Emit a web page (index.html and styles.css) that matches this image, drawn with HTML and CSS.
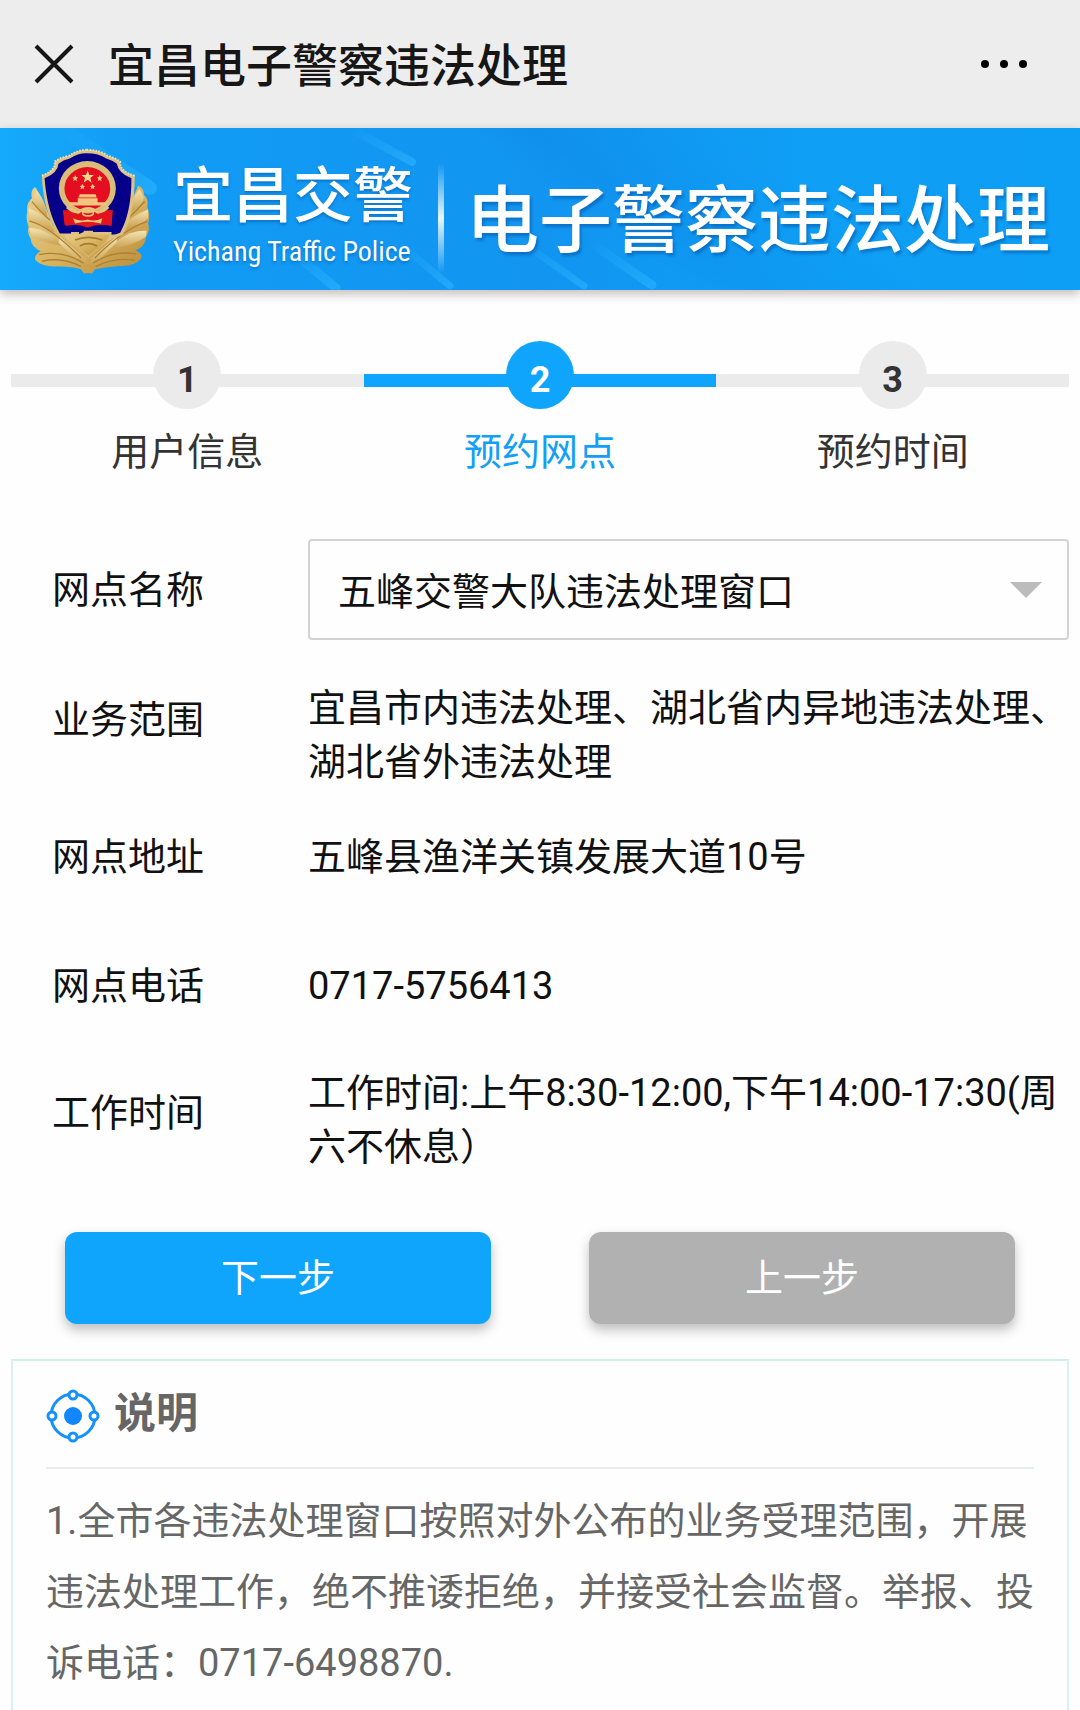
FILE: index.html
```html
<!DOCTYPE html>
<html lang="zh-CN">
<head>
<meta charset="utf-8">
<meta name="viewport" content="width=device-width, initial-scale=1">
<title>宜昌电子警察违法处理</title>
<link rel="stylesheet" href="styles.css">
</head>
<body>
<header class="topbar">
  <button class="icon-button" type="button" aria-label="关闭">
    <svg width="40" height="40" viewBox="0 0 40 40"><path d="M2 2L38 38M38 2L2 38" stroke="#161616" stroke-width="4" fill="none"/></svg>
  </button>
  <h1 class="topbar-title">宜昌电子警察违法处理</h1>
  <button class="icon-button" type="button" aria-label="更多">
    <svg width="48" height="12" viewBox="0 0 48 12" fill="#000"><circle cx="5" cy="6" r="4"/><circle cx="24" cy="6" r="4"/><circle cx="43" cy="6" r="4"/></svg>
  </button>
</header>

<div class="banner">
  <svg class="streaks" viewBox="0 0 1080 162" preserveAspectRatio="none" aria-hidden="true">
    <defs>
      <linearGradient id="streak" x1="0" y1="0" x2="1" y2="1">
        <stop offset="0" stop-color="#2bb4ff" stop-opacity="0"/><stop offset="1" stop-color="#2bb4ff" stop-opacity=".6"/>
      </linearGradient>
    </defs>
    <g fill="none" stroke="url(#streak)" stroke-linecap="round">
      <path d="M590 114L652 157" stroke-width="9"/>
      <path d="M510 106L584 158" stroke-width="7"/>
      <path d="M400 116L450 158" stroke-width="7"/>
      <path d="M290 122L336 160" stroke-width="9"/>
      <path d="M350 0L412 34" stroke-width="8"/>
      <path d="M60 0L150 60" stroke-width="14"/>
    </g>
  </svg>
  <svg class="emblem" viewBox="45 42 380 385" role="img" aria-label="警徽">
    <defs>
      <linearGradient id="gold" x1="0" y1="0" x2="1" y2="1">
        <stop offset="0" stop-color="#e9d08c"/><stop offset=".5" stop-color="#d9b564"/><stop offset="1" stop-color="#b98a35"/>
      </linearGradient>
      <linearGradient id="pale" x1="0" y1="0" x2="0" y2="1">
        <stop offset="0" stop-color="#f3e5b4"/><stop offset="1" stop-color="#c79c49"/>
      </linearGradient>
    </defs>
    <path fill="url(#gold)" d="M76 162Q60 172 66 196Q48 210 52 238Q46 256 56 282Q50 300 62 318Q64 342 92 356Q72 366 76 382Q96 404 150 402Q190 402 214 410L222 422H248L256 410Q290 402 332 400Q376 402 396 376Q400 362 378 354Q410 340 410 312Q424 296 416 272Q424 250 414 222Q418 196 404 186Q404 164 386 158L372 190L340 280H130L98 200Z"/>
    <g fill="url(#pale)">
      <path d="M80 172Q110 210 112 250Q80 230 70 198Z"/>
      <path d="M56 226Q110 246 136 300Q90 280 56 250Z"/>
      <path d="M58 286Q120 290 160 340Q90 330 62 308Z"/>
      <path d="M390 168Q362 200 362 240Q396 222 404 194Z"/>
      <path d="M416 230Q360 250 338 290Q392 282 416 256Z"/>
      <path d="M412 294Q350 290 296 350Q370 340 410 312Z"/>
      <path d="M150 312L228 378L236 398L244 378L322 310L322 328L246 404H226L146 330Z"/>
    </g>
    <g fill="none" stroke="#ad8136" stroke-width="4">
      <path d="M88 366Q160 352 222 392M380 364Q310 352 250 392M96 386Q160 372 214 402M376 384Q320 372 258 402"/>
      <path d="M58 264Q120 280 214 376M414 266Q340 290 256 376M66 206Q90 236 120 262M406 206Q380 236 350 262"/>
    </g>
    <path d="M230 50Q270 50 294 68Q320 76 332 86Q330 116 376 128Q376 246 340 306Q290 320 236 374Q180 322 148 306Q100 240 96 128Q140 112 134 86Q150 74 178 68Q200 52 230 50Z" fill="#dcc183"/>
    <path d="M230 50Q270 50 294 68Q320 76 332 86Q330 116 376 128" fill="none" stroke="#f0deb0" stroke-width="6" stroke-dasharray="5 4"/>
    <path d="M96 128Q140 112 134 86Q150 74 178 68Q200 52 230 50" fill="none" stroke="#f0deb0" stroke-width="6" stroke-dasharray="5 4"/>
    <path d="M230 60Q268 60 290 76Q310 82 322 92Q326 120 366 136Q366 240 332 300Q320 306 306 306V298H250V294H222V304H208V298H184V302H150Q112 240 104 136Q144 120 146 92Q160 80 180 76Q204 60 230 60Z" fill="#050087"/>
    <path fill="url(#gold)" d="M164 306L190 304H208L222 298H250V306H300L290 326L236 370L178 324Z"/>
    <path d="M196 322Q236 306 278 322M210 340Q236 326 262 340" fill="none" stroke="#a77b2f" stroke-width="5"/>
    <path d="M160 232H310L306 280Q270 270 234 284Q200 270 168 280Z" fill="#e51520"/>
    <ellipse cx="233" cy="166" rx="86" ry="82" fill="#d9bd79"/>
    <ellipse cx="233" cy="167" rx="69" ry="65" fill="#e40e20"/>
    <path fill="#f6d78e" d="M234 112L239 126H253L242 135L246 149L234 140L222 149L226 135L215 126H229Z"/>
    <g fill="#efc878"><path d="M196 126L199 132L205 133L200 138L202 145L196 141L190 145L192 138L188 133L194 132Z"/><path d="M270 126L273 132L279 133L274 138L276 145L270 141L264 145L266 138L262 133L268 132Z"/><path d="M218 152L221 158L226 159L222 163L223 169L218 166L212 169L214 163L210 159L215 158Z"/><path d="M249 152L252 158L257 159L253 163L254 169L249 166L243 169L245 163L241 159L246 158Z"/></g>
    <path fill="#f2c57c" d="M210 184H258L261 194H206ZM204 196H264V208H204ZM178 208H292L290 218H180Z"/>
    <path d="M160 234H208Q234 250 262 234H306L306 276H280Q236 266 190 276H164Z" fill="#e3131d"/>
    <path d="M172 222Q186 236 206 238Q236 216 264 238Q284 236 296 222" fill="none" stroke="#e6c47c" stroke-width="9"/>
    <path d="M190 256Q212 268 234 260Q256 268 278 256L274 272Q234 262 196 272Z" fill="#ecc577"/>
    <ellipse cx="235" cy="241" rx="16" ry="8" fill="none" stroke="#ecc577" stroke-width="5"/>
  </svg>
  <div class="brand">
    <span class="brand-name">宜昌交警</span>
    <span class="brand-latin" lang="en">Yichang Traffic Police</span>
  </div>
  <span class="banner-rule"></span>
  <strong class="banner-title">电子警察违法处理</strong>
</div>

<main class="page">
  <ol class="steps">
    <li class="step"><span class="step-track"><span class="step-dot">1</span></span><span class="step-label">用户信息</span></li>
    <li class="step step-active" aria-current="step"><span class="step-track"><span class="step-dot">2</span></span><span class="step-label">预约网点</span></li>
    <li class="step"><span class="step-track"><span class="step-dot">3</span></span><span class="step-label">预约时间</span></li>
  </ol>

  <form class="form">
    <div class="row row-select">
      <label class="label" for="site">网点名称</label>
      <div class="select-wrap">
        <select class="select" id="site"><option>五峰交警大队违法处理窗口</option></select>
        <svg class="caret" width="32" height="16" viewBox="0 0 32 16"><path d="M0 0H32L16 16Z" fill="#bcbcbc"/></svg>
      </div>
    </div>
    <dl class="details">
      <div class="row row-scope"><dt class="label">业务范围</dt><dd class="value">宜昌市内违法处理、湖北省内异地违法处理、湖北省外违法处理</dd></div>
      <div class="row row-address"><dt class="label">网点地址</dt><dd class="value">五峰县渔洋关镇发展大道10号</dd></div>
      <div class="row row-phone"><dt class="label">网点电话</dt><dd class="value">0717-5756413</dd></div>
      <div class="row row-hours"><dt class="label">工作时间</dt><dd class="value">工作时间:上午8:30-12:00,下午14:00-17:30(周六不休息）</dd></div>
    </dl>
    <div class="actions">
      <button class="button button-next" type="button">下一步</button>
      <button class="button button-back" type="button">上一步</button>
    </div>
  </form>

  <section class="notice">
    <h2 class="notice-title">
      <svg width="54" height="54" viewBox="0 0 54 54" fill="none" stroke="#1790fb" aria-hidden="true">
        <circle cx="27" cy="27" r="22" stroke-width="3"/>
        <circle cx="27" cy="27" r="9" fill="#1187fb" stroke="none"/>
        <g fill="#fff" stroke-width="3"><circle cx="27" cy="6" r="4"/><circle cx="48" cy="27" r="4"/><circle cx="27" cy="48" r="4"/><circle cx="6" cy="27" r="4"/></g>
      </svg>
      <span class="notice-name">说明</span>
    </h2>
    <p class="notice-text">1.全市各违法处理窗口按照对外公布的业务受理范围，开展违法处理工作，绝不推诿拒绝，并接受社会监督。举报、投诉电话：0717-6498870.</p>
  </section>
</main>
</body>
</html>
```
FILE: styles.css
```css
* {
  box-sizing: border-box;
}

body {
  margin: 0;
  min-height: 100vh;
  display: flex;
  flex-direction: column;
  background: #fefefe;
  color: #111;
  font-family: Roboto, "Noto Sans CJK SC", sans-serif;
  font-size: 38px;
  line-height: 54px;
}

/* Title bar */
.topbar {
  display: flex;
  align-items: center;
  height: 128px;
  padding: 0 52px 0 34px;
  background: #ededed;
}

.icon-button {
  display: flex;
  padding: 0;
  border: 0;
  background: none;
}

.topbar-title {
  flex: 1;
  margin: 0 0 0 34px;
  padding-top: 4px;
  color: #161616;
  font-size: 46px;
  font-weight: 500;
}

/* Banner */
.banner {
  position: relative;
  isolation: isolate;
  display: flex;
  align-items: center;
  height: 162px;
  padding: 4px 24px 0 25px;
  color: #fff;
  background:
    linear-gradient(35deg, transparent 53%, rgba(0, 100, 215, 0.1) 58%, transparent 72%),
    linear-gradient(90deg, #15aafb 0%, #129cf5 12%, #1195f0 50%, #0f9ff5 75%, #0d9ff5 100%);
  box-shadow: 0 4px 10px rgba(60, 30, 30, 0.3);
}

.streaks {
  position: absolute;
  inset: 0;
  z-index: -1;
  width: 100%;
  height: 100%;
}

.emblem {
  width: 126px;
  height: 128px;
  flex: none;
}

.brand {
  display: flex;
  flex: none;
  flex-direction: column;
  width: 240px;
  margin-left: 22px;
  padding-top: 10px;
  text-shadow: 0 2px 3px rgba(0, 60, 140, 0.4);
  white-space: nowrap;
}

.brand-name {
  font-size: 60px;
  font-weight: 500;
  line-height: 72px;
}

.brand-latin {
  font-family: "Liberation Sans Narrow", "Roboto Condensed", "Liberation Sans", sans-serif;
  font-size: 28px;
  font-weight: 400;
  line-height: 38px;
}

.banner-rule {
  flex: none;
  width: 6px;
  height: 110px;
  margin: 14px 22px 0 25px;
  background: linear-gradient(transparent, rgba(255, 255, 255, 0.9) 50%, transparent);
}

.banner-title {
  flex: 1;
  padding-top: 20px;
  font-size: 73px;
  font-weight: 500;
  line-height: 80px;
  white-space: nowrap;
  text-shadow: 2px 3px 3px rgba(0, 60, 140, 0.4);
}

/* Page body */
.page {
  flex: 1;
  display: flex;
  flex-direction: column;
  padding: 51px 11px 0;
}

/* Progress steps */
.steps {
  display: grid;
  grid-template-columns: repeat(3, 1fr);
  margin: 0;
  padding: 0;
  list-style: none;
}

.step {
  display: flex;
  flex-direction: column;
  gap: 16px;
  text-align: center;
  color: #333;
}

.step-track {
  display: flex;
  justify-content: center;
  background: linear-gradient(#ebebeb, #ebebeb) 0 33px / 100% 13px no-repeat;
}

.step-dot {
  width: 68px;
  height: 68px;
  padding-top: 8px;
  border-radius: 50%;
  background: #ebebeb;
  font-size: 36px;
  font-weight: 700;
  line-height: 62px;
}

.step-active .step-label {
  color: #12a0f4;
}

.step-active .step-track {
  background-image: linear-gradient(#10a5fc, #10a5fc);
}

.step-active .step-dot {
  background: #10a5fc;
  color: #fff;
}

/* Form */
.form {
  padding-top: 60px;
}

.row {
  display: grid;
  grid-template-columns: 256px 1fr;
  align-items: start;
  padding-left: 41px;
}

.row-select {
  align-items: center;
}

.details {
  margin: 0;
}

.row-scope,
.row-address {
  margin-top: 41px;
}

.row-phone {
  margin-top: 75px;
}

.row-hours {
  margin-top: 53px;
}

.row-scope .label {
  padding-top: 12px;
}

.row-hours .label {
  padding-top: 20px;
}

.value {
  margin: 0;
}

.select-wrap {
  display: grid;
  align-items: center;
}

.select {
  grid-area: 1 / 1;
  width: 100%;
  height: 101px;
  padding: 4px 80px 0 28px;
  border: 2px solid #d3d3d3;
  border-radius: 4px;
  background: #fefefe;
  color: #111;
  font: inherit;
  appearance: none;
}

.caret {
  grid-area: 1 / 1;
  justify-self: end;
  margin-right: 27px;
  pointer-events: none;
}

.actions {
  display: grid;
  grid-template-columns: 1fr 1fr;
  gap: 98px;
  padding: 58px 54px 0;
}

.button {
  height: 92px;
  padding: 0;
  border: 0;
  border-radius: 12px;
  color: #fff;
  font: inherit;
  box-shadow: 0 6px 12px rgba(0, 0, 0, 0.25);
}

.button-next {
  background: #10a5fc;
}

.button-back {
  background: #b1b1b1;
}

/* Notice */
.notice {
  flex: 1;
  margin-top: 35px;
  padding: 28px 33px 0;
  border: 2px solid #d9eff4;
  border-top-color: #cdf1e6;
  border-bottom: 0;
  color: #666;
}

.notice-title {
  display: flex;
  align-items: center;
  gap: 14px;
  margin: 0;
  padding-bottom: 24px;
  border-bottom: 2px solid #e8eceb;
  font-size: 42px;
  font-weight: 700;
}

.notice-name {
  padding-bottom: 4px;
  line-height: 50px;
}

.notice-text {
  margin: 17px 0 0;
  line-height: 71px;
}
```
